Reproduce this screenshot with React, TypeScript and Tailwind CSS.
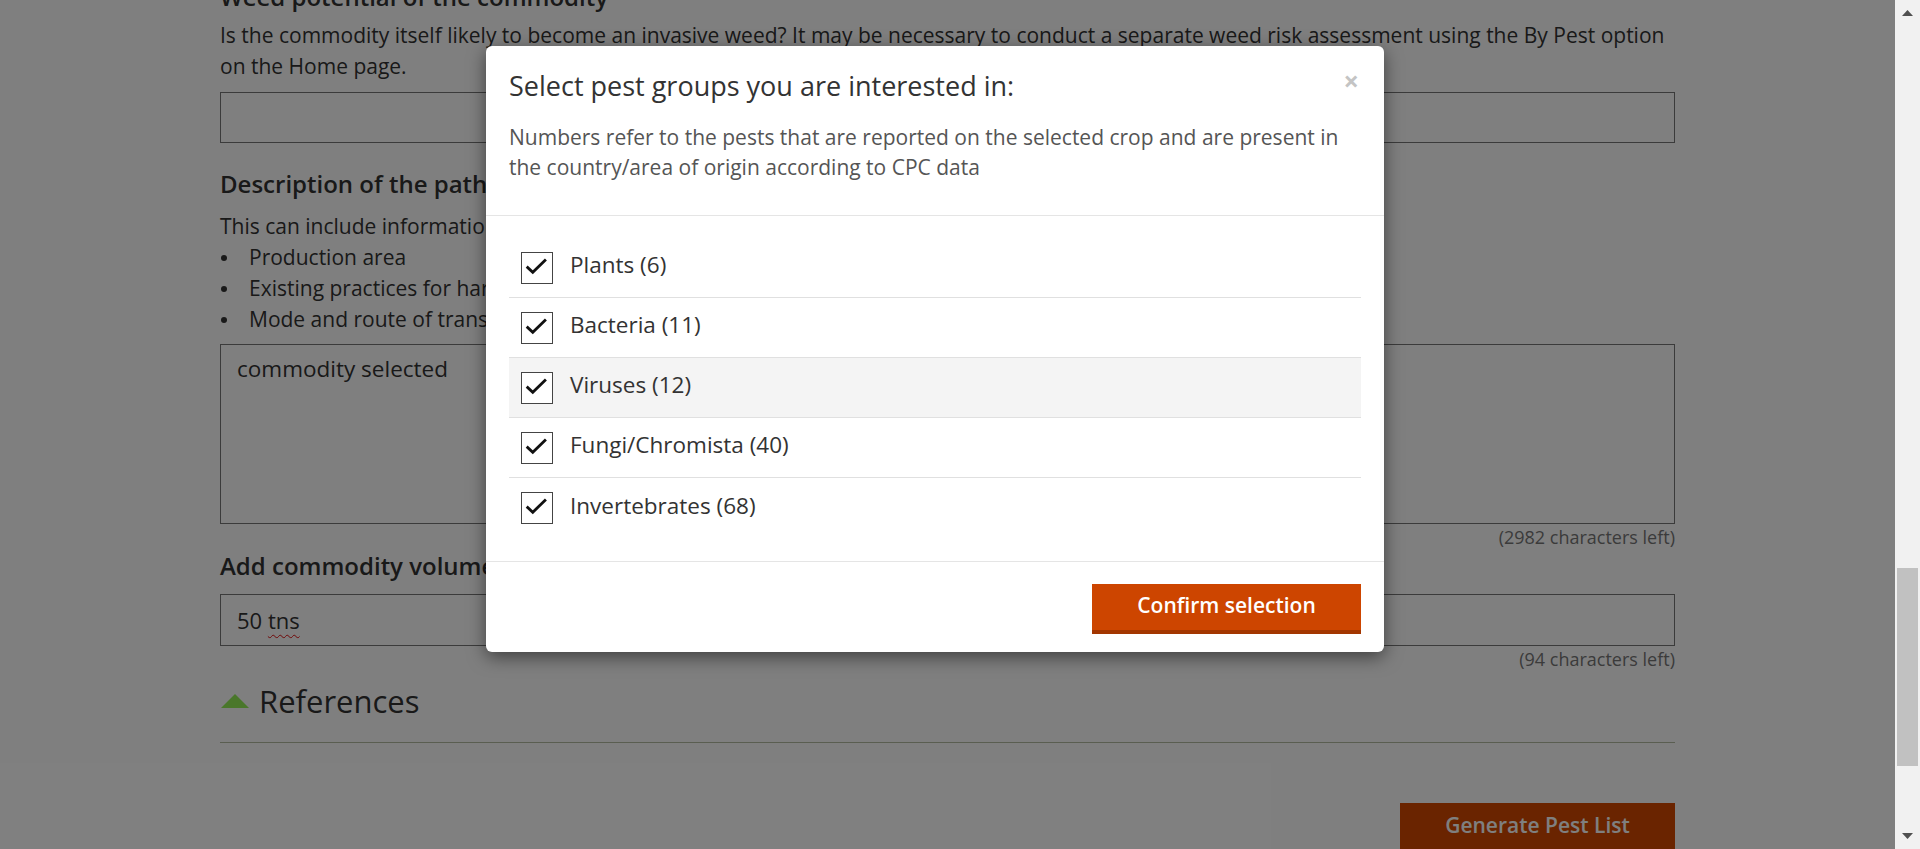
const groups = [
  { name: 'Plants', count: 6 },
  { name: 'Bacteria', count: 11 },
  { name: 'Viruses', count: 12, hover: true },
  { name: 'Fungi/Chromista', count: 40 },
  { name: 'Invertebrates', count: 68 },
];

const bullets = ['Production area', 'Existing practices for harvesting and processing', 'Mode and route of transport'];

const Checkbox = () => (
  <span className="flex h-[32px] w-[32px] shrink-0 items-center justify-center border border-[#444] bg-white">
    <svg width="32" height="32" viewBox="0 0 32 32" fill="none">
      <polyline points="5,14.5 11.5,20.5 25.5,7" stroke="#111" strokeWidth="3" />
    </svg>
  </span>
);

const Scrollbar = () => (
  <div className="flex h-full w-[25px] shrink-0 flex-col items-center bg-[#f1f1f1]">
    <svg className="mt-[10px]" width="11" height="6" viewBox="0 0 11 6">
      <polygon points="0,6 5.5,0 11,6" fill="#505050" />
    </svg>
    <div className="mt-[552px] h-[198px] w-[21px] bg-[#c1c1c1]" />
    <svg className="mb-[10px] mt-auto" width="11" height="6" viewBox="0 0 11 6">
      <polygon points="0,0 11,0 5.5,6" fill="#505050" />
    </svg>
  </div>
);

export default function App() {
  return (
    <div className="flex h-[849px] w-full overflow-hidden bg-white font-['Open_Sans',sans-serif] text-[#333]">
      <div className="relative flex-1 overflow-hidden">
        <main className="mx-auto -mt-[20px] w-[1455px]">
          <h3 className="text-[24px] font-semibold leading-[34px]">Weed potential of the commodity</h3>
          <p className="mt-[6px] text-[21px] leading-[31px]">
            Is the commodity itself likely to become an invasive weed? It may be necessary to conduct a separate weed risk
            assessment using the By Pest option on the Home page.
          </p>
          <div className="mt-[10px] h-[51px] border border-[#777]" />

          <h3 className="mt-[24px] text-[24px] font-semibold leading-[34px]">Description of the pathway</h3>
          <p className="mt-[10px] text-[21px] leading-[31px]">This can include information on:</p>
          <ul className="text-[21px] leading-[31px]">
            {bullets.map((b) => (
              <li key={b} className="flex items-center">
                <span className="ml-[1px] mr-[22px] h-[6px] w-[6px] rounded-full bg-[#333]" />
                {b}
              </li>
            ))}
          </ul>
          <div className="mt-[9px] h-[180px] border border-[#777] px-[16px] pt-[8px] text-[22.5px] leading-[31px]">
            commodity selected
          </div>
          <div className="mt-[2px] text-right text-[18px] leading-[22px] text-[#777]">(2982 characters left)</div>

          <h3 className="mt-[1px] text-[24px] font-semibold leading-[34px]">Add commodity volume</h3>
          <div className="mt-[11px] flex h-[52px] items-center border border-[#777] px-[16px] text-[22px]">
            50&nbsp;
            <span className="underline decoration-[#e01010] decoration-wavy decoration-1 underline-offset-[5px]">tns</span>
          </div>
          <div className="mt-[2px] text-right text-[18px] leading-[22px] text-[#777]">(94 characters left)</div>

          <div className="mt-[10px] flex items-center gap-[10px] border-b border-[#b5bca2] pb-[20px]">
            <svg className="ml-[1px]" width="28" height="14" viewBox="0 0 28 14">
              <polygon points="0,14 14,0 28,14" fill="#94ef57" />
            </svg>
            <h2 className="text-[31px] leading-[42px]">References</h2>
          </div>

          <div className="mt-[60px] flex justify-end">
            <button className="flex h-[56px] w-[275px] items-center justify-center bg-[#d44800] pb-[11px] text-[21px] font-semibold text-white">
              Generate Pest List
            </button>
          </div>
        </main>

        <div className="absolute inset-0 bg-black/50" />

        <div className="absolute left-[486px] top-[46px] w-[898px] rounded-[6px] bg-white shadow-[0_5px_18px_rgba(0,0,0,0.5)]">
          <div className="border-b border-[#e5e5e5] px-[23px] pb-[33px] pt-[20px]">
            <div className="flex items-start justify-between">
              <h2 className="text-[27px] leading-[40px] text-[#333]">Select pest groups you are interested in:</h2>
              <button className="mr-[2px] mt-[1px] text-[27px] font-bold leading-none text-[#c4c4c4]">×</button>
            </div>
            <p className="mt-[16px] text-[21px] leading-[30px] text-[#555]">
              Numbers refer to the pests that are reported on the selected crop and are present in the country/area of origin
              according to CPC data
            </p>
          </div>

          <div className="px-[23px] pb-[23px] pt-[22px]">
            {groups.map((g) => (
              <label
                key={g.name}
                className={`flex h-[60px] items-center gap-[17px] border-b border-[#e0e0e0] pl-[12px] text-[22.5px] text-[#333] last:border-b-0 ${
                  g.hover ? 'bg-[#f4f4f4]' : ''
                }`}
              >
                <Checkbox />
                <span className="mb-[5px]">
                  {g.name} ({g.count})
                </span>
              </label>
            ))}
          </div>

          <div className="flex justify-end border-t border-[#e5e5e5] px-[23px] pb-[18px] pt-[22px]">
            <button className="h-[50px] w-[269px] border-b-4 border-[#a33600] bg-[#cd4500] pb-[3px] text-[21px] font-semibold text-white">
              Confirm selection
            </button>
          </div>
        </div>
      </div>
      <Scrollbar />
    </div>
  );
}
